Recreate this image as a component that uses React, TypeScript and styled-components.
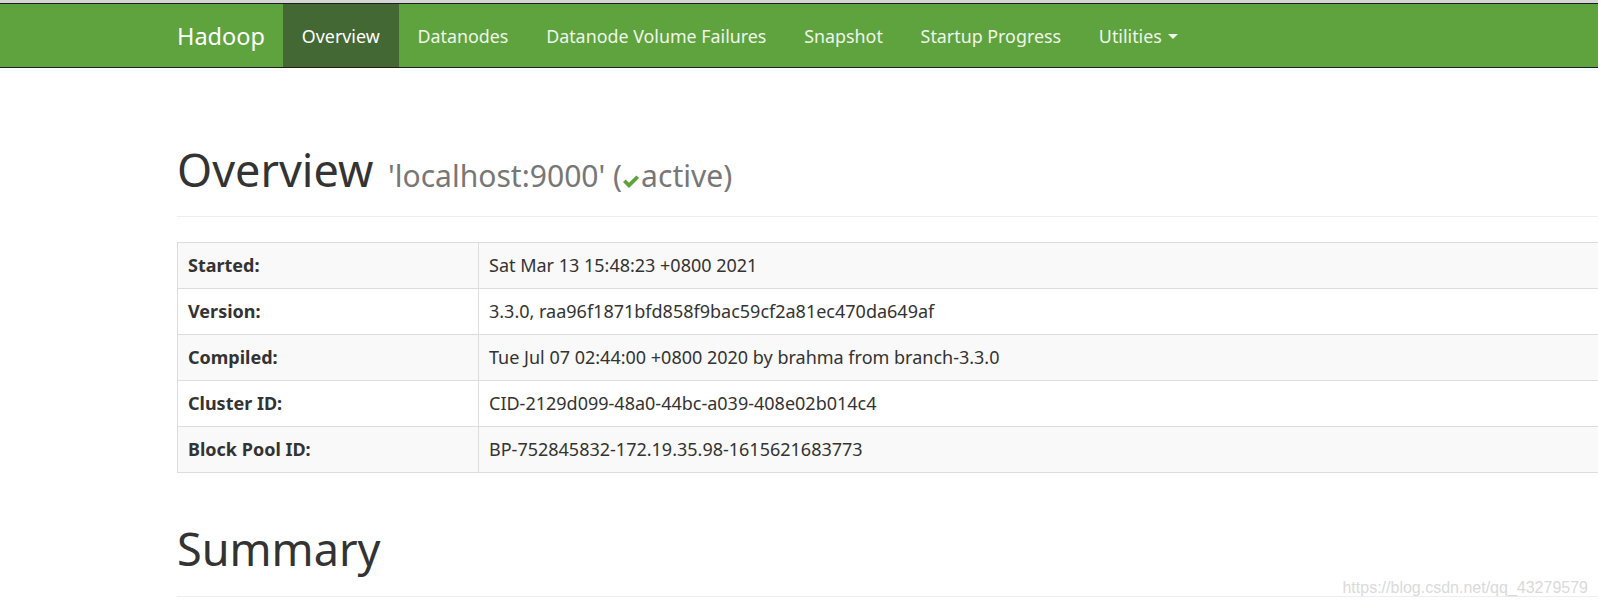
import React from 'react';
import styled, { createGlobalStyle } from 'styled-components';

const GlobalStyle = createGlobalStyle`
  html, body {
    margin: 0;
    padding: 0;
    background: #fff;
  }
  body {
    font-family: "Noto Sans", "Open Sans", Arial, sans-serif;
    color: #333;
    overflow: hidden;
  }
  * {
    box-sizing: border-box;
  }
`;

const Page = styled.div`
  position: relative;
  height: 608px;
  border-top: 3px solid #d6d6d6;
`;

const Navbar = styled.header`
  background: #5fa33e;
  border-top: 1px solid #1e1e1e;
  border-bottom: 1px solid #1e1e1e;
`;

const NavInner = styled.div`
  display: flex;
  align-items: stretch;
  height: 63px;
  padding-left: 177px;
`;

const Brand = styled.a`
  display: flex;
  align-items: center;
  padding-right: 18px;
  font-size: 23.5px;
  color: #fff;
  text-decoration: none;
`;

const NavList = styled.ul`
  display: flex;
  margin: 0;
  padding: 0;
  list-style: none;
`;

const NavLink = styled.a<{ $active?: boolean }>`
  display: flex;
  align-items: center;
  height: 100%;
  padding: 0 18.9px;
  font-size: 17.85px;
  color: ${props => (props.$active ? '#fff' : '#eef5ea')};
  background: ${props => (props.$active ? '#436834' : 'transparent')};
  text-decoration: none;
`;

const Caret = styled.span`
  display: inline-block;
  margin-left: 6px;
  margin-top: 2px;
  border-top: 5px solid currentColor;
  border-left: 5px solid transparent;
  border-right: 5px solid transparent;
`;

const Container = styled.main`
  width: 1700px;
  padding-left: 177px;
`;

const PageHeader = styled.div<{ $top: number; $pad: number }>`
  margin-top: ${props => props.$top}px;
  padding-bottom: ${props => props.$pad}px;
  border-bottom: 1px solid #eee;
`;

const Title = styled.h1`
  margin: 0;
  font-size: 45px;
  font-weight: 400;
  line-height: 1.1;
  color: #333;
`;

const Sub = styled.small`
  margin-left: 3px;
  font-size: 66.8%;
  color: #777;
`;

const Check = styled.svg`
  width: 16px;
  height: 13px;
  margin: 0 2px 0 1px;
  vertical-align: -1px;
  fill: #5ba33b;
`;

const InfoTable = styled.table`
  width: 100%;
  margin-top: 25px;
  border-collapse: collapse;
  border: 1px solid #ddd;
  font-size: 18px;
  color: #333;
`;

const Row = styled.tr`
  &:nth-child(odd) {
    background: #f9f9f9;
  }
`;

const Label = styled.th`
  width: 301px;
  height: 46px;
  padding: 0 10px;
  text-align: left;
  font-weight: 700;
  border: 1px solid #ddd;
`;

const Value = styled.td`
  height: 46px;
  padding: 0 10px;
  border: 1px solid #ddd;
`;

const Watermark = styled.div`
  position: absolute;
  right: 10px;
  bottom: 11px;
  font-family: "Liberation Sans", Arial, sans-serif;
  font-size: 16px;
  color: #dadada;
`;

const navItems = [
  'Overview',
  'Datanodes',
  'Datanode Volume Failures',
  'Snapshot',
  'Startup Progress',
];

const info: [string, string][] = [
  ['Started:', 'Sat Mar 13 15:48:23 +0800 2021'],
  ['Version:', '3.3.0, raa96f1871bfd858f9bac59cf2a81ec470da649af'],
  ['Compiled:', 'Tue Jul 07 02:44:00 +0800 2020 by brahma from branch-3.3.0'],
  ['Cluster ID:', 'CID-2129d099-48a0-44bc-a039-408e02b014c4'],
  ['Block Pool ID:', 'BP-752845832-172.19.35.98-1615621683773'],
];

const App: React.FC = () => {
  return (
    <>
      <GlobalStyle />
      <Page>
        <Navbar>
          <NavInner>
            <Brand href="#">Hadoop</Brand>
            <NavList>
              {navItems.map((item, i) => (
                <li key={item}>
                  <NavLink href="#" $active={i === 0}>
                    {item}
                  </NavLink>
                </li>
              ))}
              <li>
                <NavLink href="#">
                  Utilities
                  <Caret />
                </NavLink>
              </li>
            </NavList>
          </NavInner>
        </Navbar>

        <Container>
          <PageHeader $top={77} $pad={21}>
            <Title>
              Overview{' '}
              <Sub>
                'localhost:9000' (
                <Check viewBox="0 0 16 13">
                  <path d="M0 7 L2.6 4.4 L6 7.8 L13.4 0.4 L16 3 L6 13 Z" />
                </Check>
                active)
              </Sub>
            </Title>
          </PageHeader>

          <InfoTable>
            <tbody>
              {info.map(([label, value]) => (
                <Row key={label}>
                  <Label>{label}</Label>
                  <Value>{value}</Value>
                </Row>
              ))}
            </tbody>
          </InfoTable>

          <PageHeader $top={51} $pad={23}>
            <Title>Summary</Title>
          </PageHeader>
        </Container>

        <Watermark>https://blog.csdn.net/qq_43279579</Watermark>
      </Page>
    </>
  );
};

export default App;
